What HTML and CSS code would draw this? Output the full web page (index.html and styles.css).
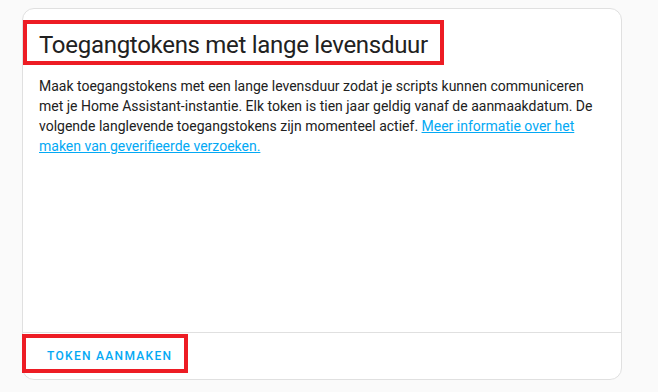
FILE: index.html
```html
<!DOCTYPE html>
<html lang="nl">
<head>
<meta charset="utf-8">
<link rel="stylesheet" href="styles.css">
</head>
<body>
<div class="page">
  <div class="card">
    <h1 class="card-header">Toegangtokens met lange levensduur</h1>
    <div class="card-content">
      <p>Maak toegangstokens met een lange levensduur zodat je scripts kunnen communiceren met je Home Assistant-instantie. Elk token is tien jaar geldig vanaf de aanmaakdatum. De volgende langlevende toegangstokens zijn momenteel actief. <a href="#">Meer informatie over het maken van geverifieerde verzoeken.</a></p>
    </div>
    <div class="card-actions">
      <button class="btn">Token aanmaken</button>
    </div>
    <div class="mark mark-header"></div>
    <div class="mark mark-button"></div>
  </div>
</div>
</body>
</html>
```

FILE: styles.css
```css
html, body {
  margin: 0;
  padding: 0;
  background: #fafafa;
  font-family: Roboto, "Noto Sans", sans-serif;
  color: #212121;
}
.page {
  padding: 8px 0 0 22px;
}
.card {
  position: relative;
  box-sizing: border-box;
  width: 600px;
  height: 372px;
  background: #fff;
  border: 1px solid #e0e0e0;
  border-radius: 12px;
  display: flex;
  flex-direction: column;
}
.card-header {
  margin: 0;
  padding: 12px 16px 0;
  font-size: 24px;
  font-weight: 400;
  line-height: 48px;
  letter-spacing: -0.012em;
  color: #212121;
}
.card-content {
  flex: 1;
  padding: 7px 16px 16px;
}
.card-content p {
  margin: 0;
  font-size: 14px;
  line-height: 20px;
  color: #212121;
}
.card-content a {
  color: #03a9f4;
  text-decoration: underline;
}
.card-actions {
  border-top: 1px solid #e0e0e0;
  padding: 5px 16px;
  display: flex;
}
.btn {
  height: 36px;
  padding: 0 8px;
  border: none;
  background: transparent;
  font-family: Roboto, sans-serif;
  font-size: 12px;
  font-weight: 500;
  letter-spacing: 1.3px;
  text-transform: uppercase;
  color: #03a9f4;
  cursor: pointer;
}
.mark {
  position: absolute;
  box-sizing: border-box;
  border: 4px solid #ed1c24;
}
.mark-header {
  left: 0;
  top: 11px;
  width: 421px;
  height: 45px;
}
.mark-button {
  left: -1px;
  top: 325px;
  width: 166px;
  height: 39px;
}
```
